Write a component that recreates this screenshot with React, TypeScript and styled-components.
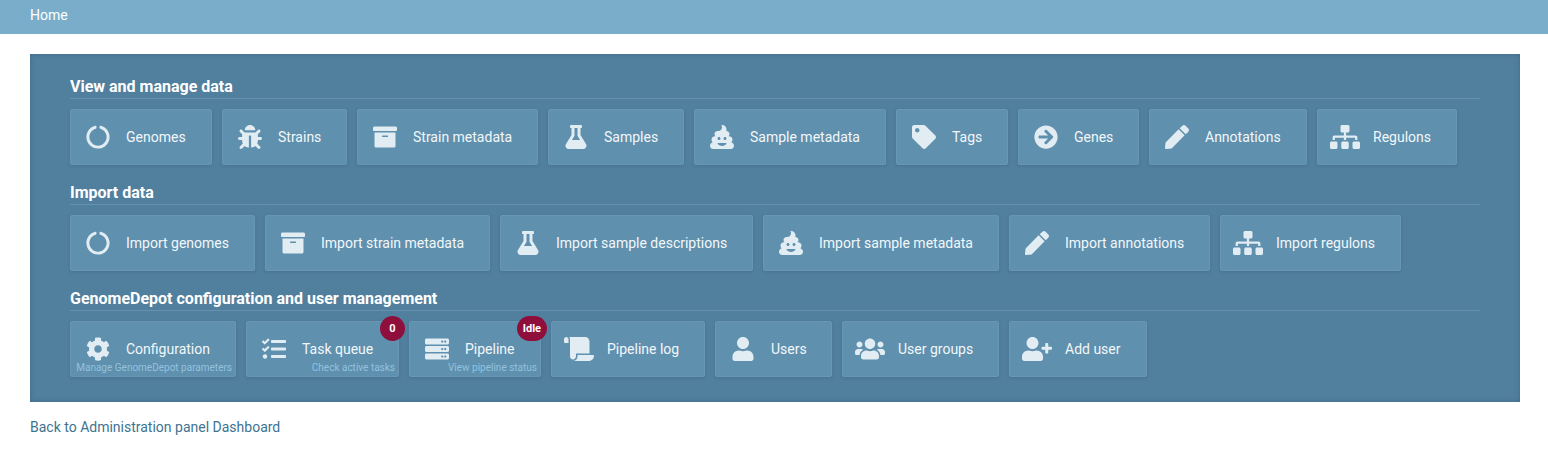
import React from 'react';
import styled, { createGlobalStyle } from 'styled-components';
import {
  FaArchive,
  FaArrowCircleRight,
  FaBug,
  FaCircleNotch,
  FaCog,
  FaFlask,
  FaPen,
  FaPoo,
  FaScroll,
  FaServer,
  FaSitemap,
  FaTag,
  FaTasks,
  FaUser,
  FaUserPlus,
  FaUsers,
} from 'react-icons/fa';
import type { IconType } from 'react-icons';

const GlobalStyle = createGlobalStyle`
  html, body {
    margin: 0;
    padding: 0;
    background: #fff;
    font-family: Roboto, "Liberation Sans", sans-serif;
  }
`;

const Header = styled.header`
  height: 34px;
  padding-left: 30px;
  background: #79adca;
  color: #fff;
  font-size: 14px;
  line-height: 30px;
`;

const Panel = styled.main`
  box-sizing: border-box;
  height: 348px;
  margin: 20px 28px 0 30px;
  padding: 20px 40px 0;
  background: #517f9e;
  box-shadow: inset 0 0 5px rgba(40, 80, 110, 0.45);
`;

const Section = styled.section`
  height: 106px;
`;

const Heading = styled.h2`
  margin: 0;
  height: 23px;
  padding-top: 1px;
  border-bottom: 1px solid #6591ad;
  color: #fff;
  font-size: 16px;
  font-weight: 700;
  line-height: 24px;
`;

const Row = styled.div`
  display: flex;
  gap: 10px;
  margin-top: 10px;
`;

const Tile = styled.a<{ $width: number }>`
  position: relative;
  box-sizing: border-box;
  display: flex;
  align-items: center;
  width: ${(p) => p.$width}px;
  height: 56px;
  padding-left: 15px;
  border: 1px solid #6897b4;
  border-radius: 2px;
  background: #5f90ae;
  box-shadow: 0 1px 3px rgba(40, 75, 100, 0.25);
  color: #f2f7fa;
  font-size: 14px;
  white-space: nowrap;
`;

const IconBox = styled.span`
  display: flex;
  flex: none;
  justify-content: center;
  width: 24px;
  margin-right: 16px;
  color: #e2ecf3;

  /* wide glyphs (640 viewBox) need 30px, the rest are scaled to fit and centred */
  svg {
    flex: none;
    width: 30px;
    height: 24px;
  }
`;

const Hint = styled.span`
  position: absolute;
  right: 3px;
  bottom: 2px;
  color: #93c2de;
  font-size: 10px;
  line-height: 13px;
`;

const Badge = styled.span`
  position: absolute;
  top: -6px;
  right: -7px;
  display: flex;
  align-items: center;
  justify-content: center;
  min-width: 25px;
  height: 25px;
  padding: 0 6px;
  box-sizing: border-box;
  border-radius: 13px;
  background: #8f0f3c;
  color: #fff;
  font-size: 11px;
  font-weight: 700;
`;

const BackLink = styled.a`
  display: block;
  margin: 16px 0 0 30px;
  color: #3d7391;
  font-size: 14px;
  line-height: 18px;
`;

interface TileData {
  label: string;
  width: number;
  icon: IconType;
  hint?: string;
  badge?: string;
}

interface SectionData {
  title: string;
  tiles: TileData[];
}

const sections: SectionData[] = [
  {
    title: 'View and manage data',
    tiles: [
      { label: 'Genomes', width: 142, icon: FaCircleNotch },
      { label: 'Strains', width: 125, icon: FaBug },
      { label: 'Strain metadata', width: 181, icon: FaArchive },
      { label: 'Samples', width: 136, icon: FaFlask },
      { label: 'Sample metadata', width: 192, icon: FaPoo },
      { label: 'Tags', width: 112, icon: FaTag },
      { label: 'Genes', width: 121, icon: FaArrowCircleRight },
      { label: 'Annotations', width: 158, icon: FaPen },
      { label: 'Regulons', width: 140, icon: FaSitemap },
    ],
  },
  {
    title: 'Import data',
    tiles: [
      { label: 'Import genomes', width: 185, icon: FaCircleNotch },
      { label: 'Import strain metadata', width: 225, icon: FaArchive },
      { label: 'Import sample descriptions', width: 253, icon: FaFlask },
      { label: 'Import sample metadata', width: 236, icon: FaPoo },
      { label: 'Import annotations', width: 201, icon: FaPen },
      { label: 'Import regulons', width: 181, icon: FaSitemap },
    ],
  },
  {
    title: 'GenomeDepot configuration and user management',
    tiles: [
      { label: 'Configuration', width: 166, icon: FaCog, hint: 'Manage GenomeDepot parameters' },
      { label: 'Task queue', width: 153, icon: FaTasks, hint: 'Check active tasks', badge: '0' },
      { label: 'Pipeline', width: 132, icon: FaServer, hint: 'View pipeline status', badge: 'Idle' },
      { label: 'Pipeline log', width: 154, icon: FaScroll },
      { label: 'Users', width: 117, icon: FaUser },
      { label: 'User groups', width: 157, icon: FaUsers },
      { label: 'Add user', width: 138, icon: FaUserPlus },
    ],
  },
];

const App: React.FC = () => (
  <>
    <GlobalStyle />
    <Header>Home</Header>
    <Panel>
      {sections.map((section) => (
        <Section key={section.title}>
          <Heading>{section.title}</Heading>
          <Row>
            {section.tiles.map(({ label, width, icon: Icon, hint, badge }) => (
              <Tile key={label} $width={width}>
                <IconBox>
                  <Icon />
                </IconBox>
                {label}
                {hint && <Hint>{hint}</Hint>}
                {badge && <Badge>{badge}</Badge>}
              </Tile>
            ))}
          </Row>
        </Section>
      ))}
    </Panel>
    <BackLink>Back to Administration panel Dashboard</BackLink>
  </>
);

export default App;
